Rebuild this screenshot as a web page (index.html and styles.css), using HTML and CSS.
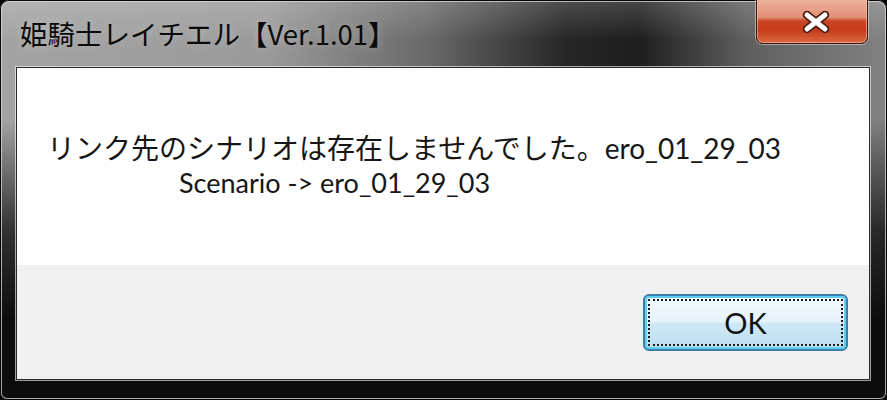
FILE: index.html
```html
<!DOCTYPE html>
<html lang="ja">
<head>
<meta charset="utf-8">
<title>姫騎士レイチエル【Ver.1.01】</title>
<link rel="stylesheet" href="styles.css">
</head>
<body>
<div class="window">
  <div class="titlebar">
    <div class="title">姫騎士レイチエル【Ver.1.01】</div>
    <div class="close" aria-label="閉じる">
      <svg width="28" height="22" viewBox="0 0 28 22">
        <path d="M5 4 L23 18 M23 4 L5 18" stroke="#4a1c10" stroke-width="8.5" stroke-linecap="round" fill="none"/>
        <path d="M5 4 L23 18 M23 4 L5 18" stroke="#ffffff" stroke-width="5" stroke-linecap="round" fill="none"/>
      </svg>
    </div>
  </div>
  <div class="client">
    <div class="message">
      <p class="line line1">リンク先のシナリオは存在しませんでした。ero_01_29_03</p>
      <p class="line line2">Scenario -&gt; ero_01_29_03</p>
    </div>
    <div class="footer">
      <button class="ok">OK</button>
    </div>
  </div>
</div>
</body>
</html>
```

FILE: styles.css
```css
* { box-sizing: border-box; }

html, body {
  margin: 0;
  padding: 0;
  background: #000;
}

body {
  width: 887px;
  height: 400px;
  overflow: hidden;
  font-family: Lato, "Noto Sans CJK JP", sans-serif;
}

.window {
  width: 887px;
  height: 400px;
  border-radius: 9px 9px 7px 7px;
  padding: 0 17px 20px 16px;
  display: flex;
  flex-direction: column;
  background:
    linear-gradient(180deg, rgba(12,12,12,0) 0px, rgba(12,12,12,0) 120px, rgba(12,12,12,0.75) 230px, #0c0c0c 320px),
    linear-gradient(180deg, rgba(255,255,255,0.18) 0px, rgba(255,255,255,0) 40px),
    linear-gradient(90deg, #a3a3a3 0%, #9a9a9a 30%, #6a6a6a 48%, #262626 64%, #1e1e1e 72%, #5e5e5e 84%, #828282 100%);
  box-shadow: inset 0 0 0 1px #050505, inset 0 0 0 2px rgba(220,220,220,0.75);
}

.titlebar {
  height: 67px;
  display: flex;
  align-items: flex-start;
  padding-left: 4px;
}

.title {
  padding-top: 13px;
  font-family: "Noto Sans CJK JP", sans-serif;
  font-size: 27.5px;
  line-height: 40px;
  color: #0a0a0a;
  text-shadow: 0 0 10px rgba(255,255,255,0.35);
  white-space: nowrap;
}

.close {
  margin-left: auto;
  margin-right: 2px;
  margin-top: -1px;
  width: 112px;
  height: 45px;
  display: flex;
  align-items: center;
  justify-content: center;
  padding-left: 8px;
  padding-top: 2px;
  border: 1px solid #3b1408;
  border-top: none;
  border-radius: 0 0 7px 7px;
  background: linear-gradient(180deg, #efb4a0 0%, #e08f75 42%, #c94424 50%, #c73a1a 70%, #db6a42 100%);
  box-shadow: inset 0 0 0 1px rgba(255,210,190,0.55), 0 0 0 1px rgba(255,255,255,0.45);
}

.client {
  flex: 1;
  display: flex;
  flex-direction: column;
  border: 1px solid #2a2a2a;
  box-shadow: 0 0 0 1px rgba(255,255,255,0.6);
  background: #f0f0f0;
}

.message {
  height: 197px;
  background: #ffffff;
  padding: 64px 0 0 30px;
  color: #161616;
}

.line {
  margin: 0;
  font-size: 28px;
  line-height: 32px;
  white-space: nowrap;
}

.line2 {
  padding-left: 132px;
  padding-top: 3px;
  font-size: 27px;
}

.footer {
  flex: 1;
  display: flex;
  justify-content: flex-end;
  align-items: flex-start;
  padding: 29px 21px 0 0;
  background: #f0f0f0;
}

.ok {
  width: 205px;
  height: 57px;
  font-family: Lato, "Noto Sans", sans-serif;
  font-size: 29px;
  color: #111;
  border: 2px solid #3a7ea8;
  border-radius: 6px;
  background: linear-gradient(180deg, #f3fafe 0%, #e5f3fb 48%, #cfe8f6 52%, #bcdef2 100%);
  box-shadow: inset 0 0 0 2px #5fd0f2;
  outline: 2px dotted #1a1a1a;
  outline-offset: -7px;
  padding: 0;
}
```
